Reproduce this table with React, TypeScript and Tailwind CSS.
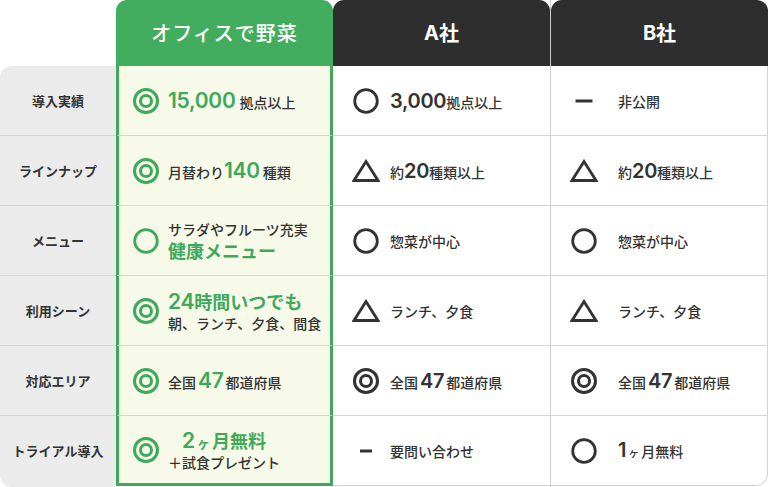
import React from "react";

const JP = { fontFamily: '"Noto Sans CJK JP", "Noto Sans", sans-serif' };
const NUM = { fontFamily: 'Inter, "Noto Sans CJK JP", sans-serif' };

const G = "#3fa95b";
const D = "#333333";

function DoubleCircle({ color }: { color: string }) {
  return (
    <svg width="26" height="26" viewBox="0 0 26 26" fill="none">
      <circle cx="13" cy="13" r="11.5" stroke={color} strokeWidth="3" />
      <circle cx="13" cy="13" r="5.5" stroke={color} strokeWidth="3" />
    </svg>
  );
}
function Circle({ color }: { color: string }) {
  return (
    <svg width="26" height="26" viewBox="0 0 26 26" fill="none">
      <circle cx="13" cy="13" r="11.3" stroke={color} strokeWidth="2.8" />
    </svg>
  );
}
function Triangle() {
  return (
    <svg width="28" height="24" viewBox="0 0 28 24" fill="none">
      <path d="M14 2.5 L26 21.5 H2 Z" stroke={D} strokeWidth="2.8" strokeLinejoin="miter" />
    </svg>
  );
}
function Dash({ w }: { w: number }) {
  return (
    <svg width="28" height="6" viewBox="0 0 28 6">
      <rect x={(28 - w) / 2} y="1.5" width={w} height="3" fill={D} />
    </svg>
  );
}

const labels = ["導入実績", "ラインナップ", "メニュー", "利用シーン", "対応エリア", "トライアル導入"];

function Num({ children, color, size = 20 }: { children: React.ReactNode; color: string; size?: number }) {
  return (
    <span style={{ ...NUM, color, fontSize: size }} className="font-semibold leading-none tracking-[-0.3px]">
      {children}
    </span>
  );
}

function Txt({ children }: { children: React.ReactNode }) {
  return (
    <span style={JP} className="text-[14px] font-medium text-[#333] leading-none">
      {children}
    </span>
  );
}

function GCell({ icon, children, last }: { icon: React.ReactNode; children: React.ReactNode; last?: boolean }) {
  return (
    <div
      className={`h-[70px] flex items-center pl-[14px] gap-[9px] border-x-[3px] border-[#3fa95b] ${
        last ? "border-b-[3px]" : "border-b border-b-[#d6d9cc]"
      }`}
    >
      <div className="w-[26px] flex justify-center shrink-0">{icon}</div>
      <div className="flex flex-col">{children}</div>
    </div>
  );
}

function Cell({ icon, children, gap, last }: { icon: React.ReactNode; children: React.ReactNode; gap: string; last?: boolean }) {
  return (
    <div className={`h-[70px] flex items-center pl-[19px] border-b border-[#d4d4d4] ${gap} ${last ? "" : ""}`}>
      <div className="w-[28px] flex justify-center shrink-0">{icon}</div>
      <div className="flex items-baseline">{children}</div>
    </div>
  );
}

export default function App() {
  return (
    <div className="w-[768px] h-[487px] bg-white flex" style={JP}>
      {/* label column */}
      <div className="w-[116px] flex flex-col">
        <div className="h-[66px]" />
        <div className="bg-[#ebebeb] rounded-tl-[12px] rounded-bl-[12px] flex flex-col shadow-[0_1px_1px_rgba(0,0,0,0.08)]">
          {labels.map((l, i) => (
            <div
              key={l}
              className={`h-[70px] flex items-center justify-center text-[13px] font-semibold text-[#333] ${
                i < 5 ? "border-b border-[#d6d6d6]" : ""
              }`}
            >
              {l}
            </div>
          ))}
        </div>
      </div>

      {/* green column */}
      <div className="w-[217px] flex flex-col">
        <div className="h-[66px] bg-[#43ad5f] rounded-t-[11px] flex items-center justify-center text-white text-[20px] font-medium tracking-[1px]">
          オフィスで野菜
        </div>
        <div className="bg-[#f7fae9] flex flex-col">
          <GCell icon={<DoubleCircle color={G} />}>
            <div className="flex items-baseline gap-[4px]">
              <Num color={G} size={21}>15,000</Num>
              <Txt>拠点以上</Txt>
            </div>
          </GCell>
          <GCell icon={<DoubleCircle color={G} />}>
            <div className="flex items-baseline">
              <Txt>月替わり</Txt>
              <Num color={G} size={21}>140</Num>
              <span className="ml-[3px]"><Txt>種類</Txt></span>
            </div>
          </GCell>
          <GCell icon={<Circle color={G} />}>
            <div className="flex flex-col gap-[5px]">
              <Txt>サラダやフルーツ充実</Txt>
              <span className="text-[18px] font-bold leading-none" style={{ color: G }}>
                健康メニュー
              </span>
            </div>
          </GCell>
          <GCell icon={<DoubleCircle color={G} />}>
            <div className="flex flex-col gap-[4px]">
              <div className="flex items-baseline">
                <Num color={G} size={21}>24</Num>
                <span className="text-[18px] font-bold leading-none" style={{ color: G }}>
                  時間いつでも
                </span>
              </div>
              <Txt>朝、ランチ、夕食、間食</Txt>
            </div>
          </GCell>
          <GCell icon={<DoubleCircle color={G} />}>
            <div className="flex items-baseline">
              <Txt>全国</Txt>
              <span className="mx-[2px]"><Num color={G} size={21}>47</Num></span>
              <Txt>都道府県</Txt>
            </div>
          </GCell>
          <GCell icon={<DoubleCircle color={G} />} last>
            <div className="flex flex-col items-center gap-[4px]">
              <div className="flex items-baseline" style={{ color: G }}>
                <Num color={G} size={21}>2</Num>
                <span className="text-[13px] font-bold leading-none mx-[2px]">ヶ</span>
                <span className="text-[18px] font-bold leading-none">月無料</span>
              </div>
              <Txt>＋試食プレゼント</Txt>
            </div>
          </GCell>
        </div>
      </div>

      {/* A column */}
      <div className="w-[217px] flex flex-col">
        <div className="h-[66px] bg-[#2e2e2e] rounded-t-[11px] flex items-center justify-center text-white text-[20px] font-bold">
          <span style={NUM} className="font-bold">A</span>社
        </div>
        <div className="flex flex-col">
          <Cell icon={<Circle color={D} />} gap="gap-[10px]">
            <Num color={D} size={20}>3,000</Num>
            <Txt>拠点以上</Txt>
          </Cell>
          <Cell icon={<Triangle />} gap="gap-[10px]">
            <Txt>約</Txt>
            <Num color={D} size={20}>20</Num>
            <Txt>種類以上</Txt>
          </Cell>
          <Cell icon={<Circle color={D} />} gap="gap-[10px]">
            <Txt>惣菜が中心</Txt>
          </Cell>
          <Cell icon={<Triangle />} gap="gap-[10px]">
            <Txt>ランチ、夕食</Txt>
          </Cell>
          <Cell icon={<DoubleCircle color={D} />} gap="gap-[10px]">
            <Txt>全国</Txt>
            <span className="mx-[2px]"><Num color={D} size={20}>47</Num></span>
            <Txt>都道府県</Txt>
          </Cell>
          <Cell icon={<Dash w={12} />} gap="gap-[10px]" last>
            <Txt>要問い合わせ</Txt>
          </Cell>
        </div>
      </div>

      {/* B column */}
      <div className="w-[218px] flex flex-col border-l border-[#cfcfcf]">
        <div className="h-[66px] bg-[#2e2e2e] rounded-t-[11px] flex items-center justify-center text-white text-[20px] font-bold">
          <span style={NUM} className="font-bold">B</span>社
        </div>
        <div className="flex flex-col border-r border-[#d4d4d4] rounded-br-[12px] overflow-hidden">
          <Cell icon={<Dash w={17} />} gap="gap-[20px]">
            <Txt>非公開</Txt>
          </Cell>
          <Cell icon={<Triangle />} gap="gap-[20px]">
            <Txt>約</Txt>
            <Num color={D} size={20}>20</Num>
            <Txt>種類以上</Txt>
          </Cell>
          <Cell icon={<Circle color={D} />} gap="gap-[20px]">
            <Txt>惣菜が中心</Txt>
          </Cell>
          <Cell icon={<Triangle />} gap="gap-[20px]">
            <Txt>ランチ、夕食</Txt>
          </Cell>
          <Cell icon={<DoubleCircle color={D} />} gap="gap-[20px]">
            <Txt>全国</Txt>
            <span className="mx-[2px]"><Num color={D} size={20}>47</Num></span>
            <Txt>都道府県</Txt>
          </Cell>
          <div className="h-[70px] flex items-center pl-[19px] gap-[20px] border-b border-[#d4d4d4] rounded-br-[12px]">
            <div className="w-[28px] flex justify-center shrink-0">
              <Circle color={D} />
            </div>
            <div className="flex items-baseline">
              <Num color={D} size={20}>1</Num>
              <span className="text-[11px] font-medium text-[#333] mx-[2px]">ヶ</span>
              <Txt>月無料</Txt>
            </div>
          </div>
        </div>
      </div>
    </div>
  );
}
